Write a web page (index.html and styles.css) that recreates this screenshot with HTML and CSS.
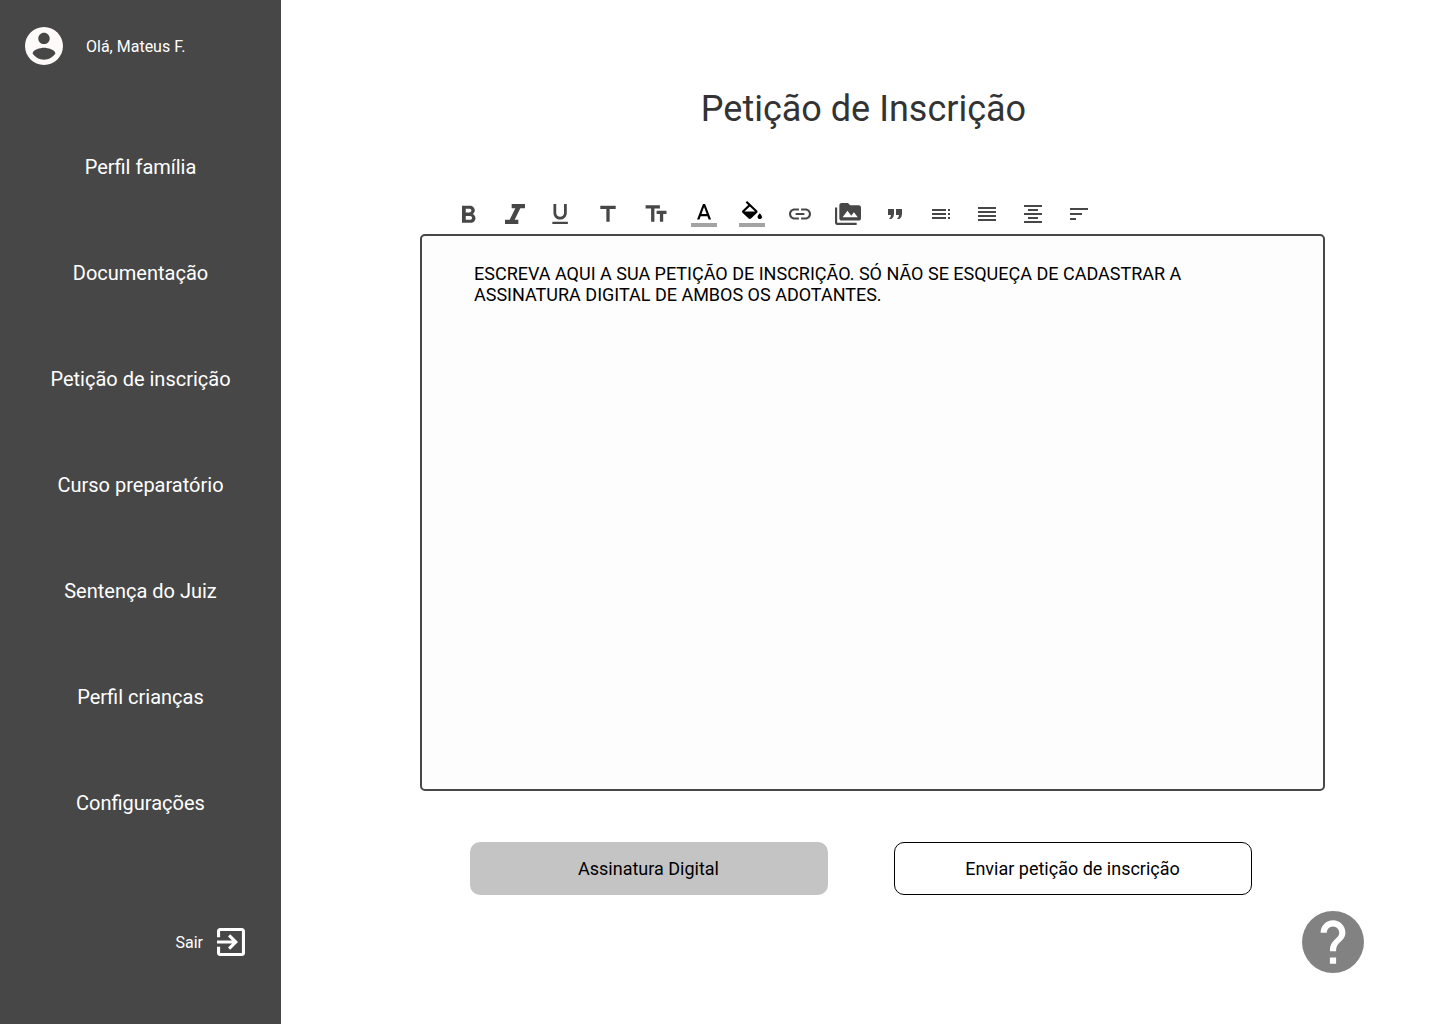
FILE: index.html
```html
<!DOCTYPE html>
<html lang="pt-BR">
<head>
<meta charset="utf-8">
<meta name="viewport" content="width=device-width, initial-scale=1">
<title>Petição de Inscrição</title>
<link rel="stylesheet" href="styles.css">
</head>
<body>
<div class="app">
  <aside class="sidebar">
    <div class="user">
      <svg class="avatar" viewBox="2 2 20 20" aria-hidden="true"><path d="M12 2C6.480 2 2 6.480 2 12s4.480 10 10 10 10-4.480 10-10S17.520 2 12 2zm0 3c1.660 0 3 1.340 3 3s-1.340 3-3 3-3-1.340-3-3 1.340-3 3-3zm0 14.200c-2.500 0-4.710-1.280-6-3.220.03-1.990 4-3.080 6-3.080 1.990 0 5.970 1.090 6 3.080-1.290 1.940-3.500 3.220-6 3.220z"/></svg>
      <span>Olá, Mateus F.</span>
    </div>
    <nav class="menu">
      <a href="#familia">Perfil família</a>
      <a href="#documentacao">Documentação</a>
      <a href="#peticao">Petição de inscrição</a>
      <a href="#curso">Curso preparatório</a>
      <a href="#sentenca">Sentença do Juiz</a>
      <a href="#criancas">Perfil crianças</a>
      <a href="#configuracoes">Configurações</a>
    </nav>
    <a class="logout" href="#sair">
      <span>Sair</span>
      <svg class="logout-icon" viewBox="3 3 18 18" aria-hidden="true"><path d="M10.090 15.590L11.500 17l5-5-5-5-1.410 1.410L12.670 11H3v2h9.670l-2.580 2.590zM19 3H5c-1.110 0-2 .9-2 2v4h2V5h14v14H5v-4H3v4c0 1.100.89 2 2 2h14c1.100 0 2-.9 2-2V5c0-1.100-.9-2-2-2z"/></svg>
    </a>
  </aside>

  <main class="content">
    <h1 class="title">Petição de Inscrição</h1>

    <section class="editor">
      <div class="toolbar" role="toolbar" aria-label="Formatação">
        <button type="button" class="tool" aria-label="Negrito"><svg viewBox="0 0 46 36"><path transform="translate(7.250 4.800) scale(1.250 1.220)" d="M15.600 10.790c.97-.67 1.650-1.770 1.650-2.790 0-2.260-1.750-4-4-4H7v14h7.040c2.090 0 3.710-1.700 3.710-3.790 0-1.520-.86-2.820-2.150-3.420zM10 6.500h3c.83 0 1.500.67 1.500 1.500s-.67 1.500-1.500 1.500h-3v-3zm3.500 9H10v-3h3.500c.83 0 1.500.67 1.500 1.500s-.67 1.500-1.500 1.500z"/></svg></button>
        <button type="button" class="tool" aria-label="Itálico"><svg viewBox="0 0 46 36"><path transform="translate(3 2.290) scale(1.667 1.429)" d="M10 4v3h2.210l-3.420 8H6v3h8v-3h-2.210l3.420-8H18V4z"/></svg></button>
        <button type="button" class="tool" aria-label="Sublinhado"><svg viewBox="0 0 46 36"><path transform="translate(8.800 4.670) scale(1.110)" d="M12 17c3.310 0 6-2.690 6-6V3h-2.500v8c0 1.930-1.570 3.500-3.500 3.500S8.500 12.930 8.500 11V3H6v8c0 3.310 2.690 6 6 6zm-7 2v2h14v-2H5z"/></svg></button>
        <button type="button" class="tool wide" aria-label="Título"><svg viewBox="0 0 48 36"><path transform="translate(10.800 5.400) scale(1.100 1.070)" d="M5 4v3h5.500v12h3V7H19V4z"/></svg></button>
        <button type="button" class="tool wide" aria-label="Tamanho do texto"><svg viewBox="0 0 48 36"><path transform="translate(37.800 4.800) scale(-1.100 1.100)" d="M9 4v3h5v12h3V7h5V4H9zm-6 8h3v7h3v-7h3V9H3v3z"/></svg></button>
        <button type="button" class="tool wide" aria-label="Cor do texto"><svg viewBox="0 0 48 36"><path class="ink" transform="translate(11.100 4.700) scale(1.080 1.110)" d="M11 3L5.500 17h2.250l1.120-3h6.250l1.120 3h2.250L13 3h-2zm-1.380 9L12 5.670 14.380 12H9.620z"/><rect class="swatch" x="11" y="27" width="26" height="4"/></svg></button>
        <button type="button" class="tool wide" aria-label="Cor de fundo"><svg viewBox="0 0 48 36"><path class="ink" transform="translate(10.700 5) scale(1.110 1.060)" d="M16.560 8.940L7.620 0 6.210 1.410l2.380 2.380-5.150 5.150c-.59.59-.59 1.540 0 2.120l5.500 5.500c.29.29.68.44 1.060.44s.77-.15 1.060-.44l5.500-5.500c.59-.58.59-1.530 0-2.120zM5.210 10L10 5.210 14.790 10H5.210zM19 11.500s-2 2.170-2 3.500c0 1.100.9 2 2 2s2-.9 2-2c0-1.330-2-3.500-2-3.500z"/><rect class="swatch" x="11" y="27" width="26" height="4"/></svg></button>
        <button type="button" class="tool wide" aria-label="Inserir link"><svg viewBox="0 0 48 36"><path transform="translate(10.800 4.800) scale(1.100)" d="M3.900 12c0-1.710 1.390-3.100 3.100-3.100h4V7H7c-2.760 0-5 2.240-5 5s2.240 5 5 5h4v-1.900H7c-1.710 0-3.100-1.390-3.100-3.100zM8 13h8v-2H8v2zm9-6h-4v1.900h4c1.710 0 3.100 1.390 3.100 3.100s-1.390 3.100-3.100 3.100h-4V17h4c2.760 0 5-2.240 5-5s-2.240-5-5-5z"/></svg></button>
        <button type="button" class="tool wide" aria-label="Inserir imagem"><svg viewBox="0 0 48 36"><path transform="translate(11 4.800) scale(1.083 1.100)" d="M2 6H0v5h.01L0 20c0 1.100.9 2 2 2h18v-2H2V6zm20-2h-8l-2-2H6c-1.100 0-1.990.9-1.990 2L4 16c0 1.100.9 2 2 2h16c1.100 0 2-.9 2-2V6c0-1.100-.9-2-2-2zM7 15l4.500-6 3.500 4.510 2.500-3.010L21 15H7z"/></svg></button>
        <button type="button" class="tool" aria-label="Citação"><svg viewBox="0 0 46 36"><path d="M16 13h6v5q0 3.500-2.500 5h-2.500q2-1.500 2-4h-3zM24 13h6v5q0 3.500-2.500 5h-2.500q2-1.500 2-4h-3z"/></svg></button>
        <button type="button" class="tool" aria-label="Lista"><svg viewBox="0 0 46 36"><path d="M14 13h14v2H14zM14 17h14v2H14zM14 21h14v2H14zM30 13h2v2h-2zM30 17h2v2h-2zM30 21h2v2h-2z"/></svg></button>
        <button type="button" class="tool" aria-label="Justificar"><svg viewBox="0 0 46 36"><path d="M14 11h18v2H14zM14 15h18v2H14zM14 19h18v2H14zM14 23h18v2H14z"/></svg></button>
        <button type="button" class="tool" aria-label="Centralizar"><svg viewBox="0 0 46 36"><path d="M14 9h18v2H14zM18 13h10v2H18zM14 17h18v2H14zM18 21h10v2H18zM14 25h18v2H14z"/></svg></button>
        <button type="button" class="tool" aria-label="Ordenar"><svg viewBox="0 0 46 36"><path d="M14 12h18v2H14zM14 17h12v2H14zM14 22h6v2H14z"/></svg></button>
      </div>
      <textarea class="text" aria-label="Texto da petição" spellcheck="false">ESCREVA AQUI A SUA PETIÇÃO DE INSCRIÇÃO. SÓ NÃO SE ESQUEÇA DE CADASTRAR A ASSINATURA DIGITAL DE AMBOS OS ADOTANTES.</textarea>
    </section>

    <div class="actions">
      <button type="button" class="btn btn-filled">Assinatura Digital</button>
      <button type="button" class="btn btn-outline">Enviar petição de inscrição</button>
    </div>

    <button type="button" class="help" aria-label="Ajuda"><svg viewBox="2 2 20 20"><circle cx="12" cy="12" r="10"/><path d="M13 19h-2v-2h2v2zm2.070-7.750l-.9.920C13.450 12.900 13 13.500 13 15h-2v-.5c0-1.100.45-2.100 1.170-2.830l1.240-1.260c.37-.36.59-.86.59-1.410 0-1.100-.9-2-2-2s-2 .9-2 2H8c0-2.210 1.790-4 4-4s4 1.790 4 4c0 .88-.36 1.680-.93 2.250z"/></svg></button>
  </main>
</div>
</body>
</html>
```
FILE: styles.css
```css
* {
  box-sizing: border-box;
}

body {
  margin: 0;
  font-family: Roboto, "Liberation Sans", sans-serif;
  background: #fff;
  color: #000;
}

button,
textarea {
  font: inherit;
  color: inherit;
}

button {
  padding: 0;
  border: 0;
  background: none;
  cursor: pointer;
}

svg {
  display: block;
}

.app {
  display: flex;
  min-height: 100vh;
}

/* Sidebar */
.sidebar {
  display: flex;
  flex-direction: column;
  flex: 0 0 281px;
  padding-bottom: 68px;
  background: #474747;
  color: #fff;
  font-size: 16px;
}

.sidebar a {
  color: inherit;
  text-decoration: none;
}

.user {
  display: flex;
  align-items: center;
  gap: 23px;
  height: 92px;
  margin-bottom: 22px;
  padding-left: 25px;
}

.avatar {
  width: 38px;
  height: 38px;
  fill: #fffafa;
}

.menu {
  display: flex;
  flex-direction: column;
  font-size: 20px;
}

.menu a {
  line-height: 106px;
  text-align: center;
}

.logout {
  display: flex;
  align-items: center;
  align-self: flex-end;
  gap: 14px;
  margin-top: auto;
  margin-right: 36px;
}

.logout-icon {
  width: 28px;
  height: 28px;
  fill: #fff;
}

/* Content */
.content {
  display: flex;
  flex: 1;
  flex-direction: column;
  min-width: 0;
  padding: 84px 76px 51px;
}

.title {
  margin: 0 0 62px;
  padding-left: 6px;
  color: #333;
  font-size: 36px;
  font-weight: 400;
  line-height: 50px;
  text-align: center;
}

.editor {
  display: flex;
  flex: 1;
  flex-direction: column;
  margin: 0 39px 51px 63px;
}

.toolbar {
  display: flex;
  flex-wrap: wrap;
  padding: 0 26px 2px;
}

.tool {
  width: 46px;
  height: 36px;
  fill: #474747;
}

.wide {
  width: 48px;
}

.ink {
  fill: #000;
}

.swatch {
  fill: #a3a3a3;
}

.text {
  flex: 1;
  width: 100%;
  min-height: 200px;
  padding: 27px 52px;
  border: 2px solid #474747;
  border-radius: 5px;
  background: #fdfdfd;
  font-size: 18px;
  line-height: 21px;
  resize: none;
}

.actions {
  display: flex;
  justify-content: center;
  gap: 66px;
  margin-bottom: 16px;
}

.btn {
  flex: 0 1 358px;
  height: 53px;
  border-radius: 10px;
  font-size: 18px;
}

.btn-filled {
  background: #c4c4c4;
}

.btn-outline {
  border: 1px solid #000;
  background: #fff;
}

.help {
  align-self: flex-end;
  width: 62px;
  height: 62px;
  border-radius: 50%;
}

.help circle {
  fill: #828282;
}

.help path {
  fill: #fff;
}
```
